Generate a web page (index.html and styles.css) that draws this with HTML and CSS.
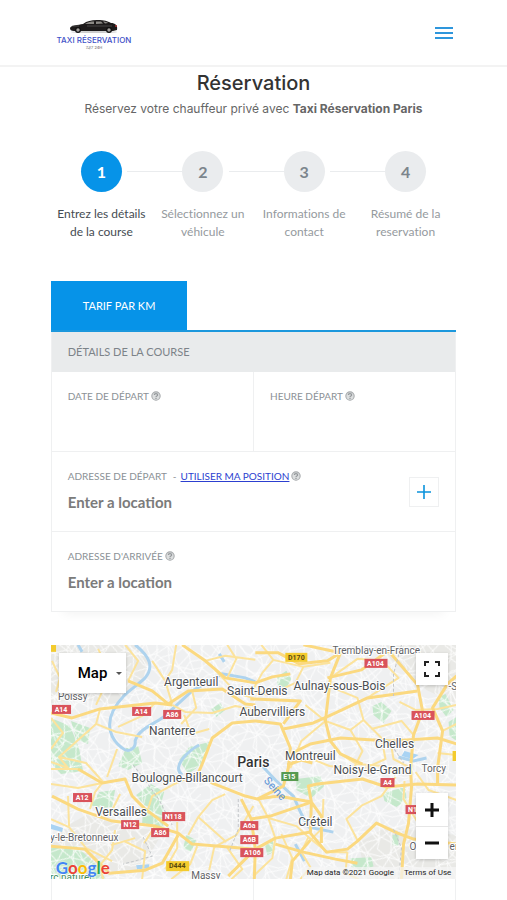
FILE: index.html
```html
<!DOCTYPE html>
<html lang="fr">

<head>
  <meta charset="utf-8" />
  <meta name="viewport" content="width=device-width, initial-scale=1" />
  <title>Taxi Réservation Paris</title>
  <link rel="stylesheet" href="styles.css">
</head>

<body>
  <svg class="defs" width="0" height="0" aria-hidden="true">
    <symbol id="help" viewBox="0 0 12 12">
      <circle cx="6" cy="6" r="5" fill="#dcdedf" stroke="#a8abad" stroke-width="1.3" />
      <path d="M4 4.8C4 2.6 8 2.6 8 4.8C8 6 6 6 6 7.2M6 8.2V9.6" fill="none" stroke="#94989b" stroke-width="1.5" />
    </symbol>
  </svg>

  <header class="header">
    <a href="#" class="logo" aria-label="Taxi Réservation">
      <svg width="76" height="32" viewBox="0 0 76 32">
        <ellipse cx="38" cy="15" rx="23" ry="1" fill="#ccc" />
        <path d="M14 11C15 8 22 8 27 7C31 4 35 3 41 3C49 3 51 4 55 6C59 6 62 8 61 13L57 14H18C15 14 14 13 14 11Z" fill="#1d1b1b" />
        <path d="M29 7C32 5 35 4.500 38 4.500V7ZM40 4.500H45L47 6.500L40 7ZM47 4.500C49 4.500 51 5 52 6L49 6.500Z" fill="#8b8985" />
        <path d="M16 9H23M31 9H56" stroke="#666" stroke-width="0.600" />
        <circle cx="22" cy="13" r="3" fill="#111" />
        <circle cx="22" cy="13" r="1.700" fill="#a5a19e" />
        <circle cx="53" cy="13" r="3" fill="#111" />
        <circle cx="53" cy="13" r="1.700" fill="#a5a19e" />
        <path d="M60 8V10" stroke="#a33" stroke-width="1.500" />
        <text class="logo-name" x="38" y="26" text-anchor="middle">TAXI RÉSERVATION</text>
        <text class="logo-sub" x="38" y="32" text-anchor="middle">7J/7 24H</text>
      </svg>
    </a>
    <button class="menu-btn" type="button" aria-label="Menu">
      <span></span>
      <span></span>
      <span></span>
    </button>
  </header>

  <main class="container">
    <h1>Réservation</h1>
    <p class="intro">Réservez votre chauffeur privé avec <strong>Taxi Réservation Paris</strong></p>

    <ol class="steps">
      <li class="step active"><span class="step-number">1</span><span class="step-label">Entrez les détails de la course</span></li>
      <li class="step"><span class="step-number">2</span><span class="step-label">Sélectionnez un véhicule</span></li>
      <li class="step"><span class="step-number">3</span><span class="step-label">Informations de contact</span></li>
      <li class="step"><span class="step-number">4</span><span class="step-label">Résumé de la reservation</span></li>
    </ol>

    <div class="tabs">
      <a href="#booking" class="tab">TARIF PAR KM</a>
    </div>

    <form id="booking" class="booking">
      <h2>DÉTAILS DE LA COURSE</h2>
      <div class="row">
        <div class="field">
          <div class="caption"><label for="date">DATE DE DÉPART</label><svg class="help"><use href="#help" /></svg></div>
          <input id="date" type="text">
        </div>
        <div class="field">
          <div class="caption"><label for="time">HEURE DÉPART</label><svg class="help"><use href="#help" /></svg></div>
          <input id="time" type="text">
        </div>
      </div>
      <div class="row">
        <div class="field">
          <div class="caption"><label for="from">ADRESSE DE DÉPART</label><span class="dash">-</span><a href="#from">UTILISER MA POSITION</a><svg class="help"><use href="#help" /></svg></div>
          <input id="from" type="text" placeholder="Enter a location">
        </div>
        <button class="add-btn" type="button" aria-label="Ajouter une adresse">
          <svg width="14" height="14" viewBox="0 0 14 14"><path d="M7 0V14M0 7H14" stroke="#0b93dc" stroke-width="1.600" /></svg>
        </button>
      </div>
      <div class="row">
        <div class="field">
          <div class="caption"><label for="to">ADRESSE D'ARRIVÉE</label><svg class="help"><use href="#help" /></svg></div>
          <input id="to" type="text" placeholder="Enter a location">
        </div>
      </div>
    </form>

    <section class="map">
      <svg class="map-canvas" viewBox="0 0 405 234" preserveAspectRatio="xMidYMid slice">
        <defs>
          <pattern id="streets" width="47" height="41" patternUnits="userSpaceOnUse" patternTransform="rotate(17)">
            <path d="M0 6L14 9L31 3L47 6M0 24L9 19L25 25L47 24M4 41L10 20L7 9L4 0M22 41L25 25L18 8L22 0M39 41L34 24L41 10L39 0M9 19L18 8L34 24L47 33M0 33L12 35L25 25M31 3L41 10M12 35L22 41" />
          </pattern>
          <pattern id="lanes" width="31" height="37" patternUnits="userSpaceOnUse" patternTransform="rotate(-28)">
            <path d="M0 9L11 12L22 6L31 9M0 26L13 29L31 26M6 37L13 29L11 12L6 0M24 37L20 20L22 6L24 0M11 12L20 20L31 17" />
          </pattern>
        </defs>

        <rect width="405" height="234" fill="#eff0f1" />

        <!-- countryside -->
        <g fill="#e9e9e6">
          <path d="M0 0H85L98 15L92 34L66 60L30 54L0 58Z" />
          <path d="M330 0H405V60L375 45L340 15Z" />
          <path d="M0 190L35 170L75 182L112 186L90 225L0 234Z" />
          <path d="M307 198L335 182L405 190V234H315Z" />
        </g>

        <!-- woods and parks -->
        <g fill="#c5e8cb">
          <path d="M0 73L19 81L28 103L32 126L10 129L0 118Z" />
          <path d="M20 76L39 83L37 99L25 94Z" />
          <path d="M67 121L75 103L87 101L91 118L77 125Z" />
          <path d="M128 115L138 102L158 97L151 119L137 129Z" />
          <path d="M226 32L235 26L240 34L235 43L226 40Z" />
          <path d="M85 150L100 139L113 147L108 166L93 160Z" />
          <path d="M92 164L112 160L112 185L91 178Z" />
          <path d="M0 203L25 201L42 216L55 234H0Z" />
          <path d="M39 160L48 147L64 145L61 162L49 163Z" />
          <path d="M245 134L269 131L273 141L260 153L245 145Z" />
          <path d="M331 148L354 142L355 155L345 162L333 156Z" />
          <path d="M321 61L330 57L340 66L332 78L322 70Z" />
          <path d="M387 52L394 49L402 65L395 72L388 63Z" />
          <path d="M397 77L405 72V96L398 91Z" />
          <path d="M299 213L320 212L322 221L311 226L300 222Z" />
          <path d="M214 201L221 195L224 206L216 210Z" />
          <path d="M341 190L347 189V201L341 200Z" />
          <path d="M160 64L169 58L174 65L165 72Z" />
          <path d="M135 190L145 195L140 207L132 203Z" />
        </g>
        <rect width="405" height="234" fill="url(#streets)" class="streets" />
        <rect width="405" height="234" fill="url(#lanes)" class="streets" />

        <!-- rivers -->
        <g class="river">
          <path d="M84 0C99 12 103 22 94 33C84 43 71 48 62 66C55 80 59 94 71 103C78 109 85 103 84 96C88 82 108 78 117 68L141 46L171 29L194 33L204 37" />
          <path d="M131 130C119 121 140 104 148 100M210 120L224 135L242 151L250 169L257 182M257 182L282 187M244 199L253 216M27 0L31 7" />
          <path d="M347 112L362 116L375 113M168 9L173 17" />
        </g>
        <path d="M0 179L12 183L11 187L0 184ZM85 220L98 219V223L86 224ZM353 106L367 110L361 114L350 111Z" fill="#a9d3f3" />

        <!-- secondary roads -->
        <g class="road thin">
          <path d="M1 16L9 33L5 47M47 4L52 14M45 60L51 47M101 16L114 36L121 59M125 0L121 25L114 36M77 36L87 16L74 0" />
          <path d="M49 64L45 79L8 112L17 123L0 117M45 79L65 87L91 92M0 73L12 88L0 104M8 112L35 118L52 137M66 104L56 132M104 58L91 71L67 82" />
          <path d="M121 60L134 67L161 68L184 61L205 65M133 70L140 89L158 84M141 46L145 63L130 79M154 16L174 11L204 15M164 25L185 48L204 54M176 0L185 14L176 33" />
          <path d="M210 0L222 15L252 22L279 18M222 15L211 28L200 48M252 22L244 38L218 50L202 47M279 33L306 14L331 16M331 16L347 33L316 53" />
          <path d="M254 60L274 76L299 85L312 75L306 53L279 42M312 75L330 93L334 114L314 123M299 85L311 106L303 122M274 76L250 96L239 123M339 96L342 114L359 123" />
          <path d="M348 57L364 65L386 64L405 60M362 90L350 76L320 84M391 86L405 79M386 108L405 110M289 109L305 119L332 121L344 130M258 113L278 121L302 124" />
          <path d="M0 139L27 143L51 138M0 124L27 124M39 164L44 147L51 138M64 185L61 205L49 220L52 234M73 196L94 206L91 234M104 181L93 198" />
          <path d="M147 128L121 140L101 151L97 164M126 177L126 203L114 224M137 190L147 172L161 155L174 149M147 172L175 197M158 225L163 202L185 190L202 161" />
          <path d="M207 154L217 173L224 193L221 213L202 231M217 173L245 181L257 192L276 207L296 207M230 189L241 213L235 234M257 192L250 207L259 222L249 234" />
          <path d="M272 154L271 183L259 195M296 207L294 228L307 234M307 197L295 174L311 160L330 151L344 132M353 136L352 154L369 182M364 127L377 145L405 155" />
          <path d="M0 174L18 182L35 203L61 216M17 151L18 181M60 200L84 193M69 149L59 169M146 201L139 219L120 234M175 201L191 224L180 234" />
        </g>

        <!-- motorways -->
        <g class="road">
          <path d="M0 68L21 73L49 64L104 58L121 60M77 36L101 46L117 59L137 46L171 44L194 59L204 60M131 0L154 16L174 33L204 38L221 32L239 29" />
          <path d="M204 76L181 78L161 93L151 119L147 128L161 138L194 151L206 154L232 141L237 123L239 103L229 79Z" />
          <path d="M252 0L289 8L276 16L248 19L227 8L204 8M289 8L279 33L274 76L279 96L289 109L311 119" />
          <path d="M199 54L249 56L232 79M232 84L262 78L282 69L316 53L366 46M239 109L259 99L289 93L339 96L386 93L405 99" />
          <path d="M276 33L310 25L337 6L366 40L371 66L362 90L359 123L360 142L357 178L352 199L350 234M405 31L396 39L381 63L391 86L386 123L386 141" />
          <path d="M1 151L27 164L61 176L104 181L127 188L141 199L204 204L224 193L259 187M27 124L51 138L74 134L81 151L94 164L117 181" />
          <path d="M0 201L34 204L58 228L94 225L111 218L127 190M190 154L200 174L204 204L203 234M177 231L202 206" />
          <path d="M206 154L227 151L260 157L257 141L266 139L311 134L335 142L366 139L405 140M260 157L259 188L275 207L296 204L306 196L325 178L346 188L362 194L405 199M260 157L270 171L270 198" />
          <path d="M199 174L219 171L260 157M224 199L252 207L284 214L306 218M236 120L250 115L261 118M259 195L241 216L239 234" />
        </g>

        <g class="border">
          <path d="M82 120L94 135L108 155L121 180M187 154L187 184L178 207M92 192L101 211L72 219M350 0L342 29L342 51M342 184L350 203L347 234M340 100L352 118" />
        </g>

        <!-- place names -->
        <g class="place" text-anchor="middle">
          <text x="140" y="41">Argenteuil</text>
          <text x="206" y="50">Saint-Denis</text>
          <text x="288" y="45">Aulnay-sous-Bois</text>
          <text x="221" y="71">Aubervilliers</text>
          <text x="121" y="90">Nanterre</text>
          <text x="343" y="103">Chelles</text>
          <text x="259" y="115">Montreuil</text>
          <text x="321" y="129">Noisy-le-Grand</text>
          <text x="136" y="137">Boulogne-Billancourt</text>
          <text x="70" y="171">Versailles</text>
          <text x="264" y="181">Créteil</text>
          <text x="202" y="122" class="city">Paris</text>
        </g>
        <g class="place small">
          <text x="281" y="9">Tremblay-en-France</text>
          <text x="7" y="55">Poissy</text>
          <text x="370" y="127">Torcy</text>
          <text x="-1" y="196">y-le-Bretonneux</text>
          <text x="140" y="234">Massy</text>
          <text x="358" y="205">O</text>
          <text x="398" y="205">er</text>
          <text x="397" y="45">-S</text>
          <text x="-1" y="236" class="park">rc naturel</text>
        </g>
        <text class="water" transform="translate(212 136) rotate(48)">Seine</text>

        <!-- road shields -->
        <g class="shields" text-anchor="middle">
          <rect x="1" y="60" width="19" height="9" /><text x="10" y="67">A14</text>
          <rect x="81" y="62" width="19" height="9" /><text x="90" y="69">A14</text>
          <rect x="112" y="65" width="18" height="9" /><text x="121" y="72">A86</text>
          <rect x="313" y="14" width="23" height="9" /><text x="324" y="21">A104</text>
          <rect x="360" y="66" width="23" height="9" /><text x="371" y="73">A104</text>
          <rect x="22" y="148" width="19" height="9" /><text x="31" y="155">A12</text>
          <rect x="111" y="167" width="23" height="9" /><text x="122" y="174">N118</text>
          <rect x="70" y="175" width="18" height="9" /><text x="79" y="182">N12</text>
          <rect x="100" y="183" width="18" height="9" /><text x="109" y="190">A86</text>
          <rect x="189" y="176" width="18" height="9" /><text x="198" y="183">A6a</text>
          <rect x="189" y="190" width="18" height="9" /><text x="198" y="197">A6B</text>
          <rect x="189" y="203" width="23" height="9" /><text x="201" y="210">A106</text>
          <rect x="329" y="133" width="14" height="9" /><text x="336" y="140">A4</text>
          <rect x="354" y="160" width="18" height="9" /><text x="361" y="167">N1</text>
          <rect x="230" y="127" width="17" height="9" class="green" /><text x="238" y="134">E15</text>
          <rect x="234" y="8" width="22" height="9" class="yellow" /><text x="245" y="15" class="dark">D170</text>
          <rect x="115" y="216" width="23" height="10" class="yellow" /><text x="126" y="223" class="dark">D444</text>
          <rect x="401" y="106" width="8" height="10" class="yellow" />
          <rect x="-3" y="0" width="8" height="7" class="yellow" />
        </g>
      </svg>

      <button class="map-btn map-type" type="button">Map<span class="caret"></span></button>
      <button class="map-btn fullscreen" type="button" aria-label="Plein écran">
        <svg width="16" height="16" viewBox="0 0 16 16"><path d="M1 5V1H5M11 1H15V5M15 11V15H11M5 15H1V11" fill="none" stroke="#222" stroke-width="2" /></svg>
      </button>
      <div class="zoom">
        <button type="button" aria-label="Zoom avant"><svg width="16" height="16" viewBox="0 0 16 16"><path d="M8 1V15M1 8H15" stroke="#111" stroke-width="3" /></svg></button>
        <button type="button" aria-label="Zoom arrière"><svg width="16" height="16" viewBox="0 0 16 16"><path d="M1 8H15" stroke="#111" stroke-width="3" /></svg></button>
      </div>
      <a href="#" class="google"><span class="b">G</span><span class="r">o</span><span class="y">o</span><span class="b">g</span><span class="g">l</span><span class="r">e</span></a>
      <div class="credits"><span>Map data ©2021 Google</span><a href="#">Terms of Use</a></div>
    </section>

    <div class="summary">
      <div></div>
      <div></div>
    </div>
  </main>
</body>

</html>
```
FILE: styles.css
```css
* {
  box-sizing: border-box;
}

body {
  margin: 0;
  background: #fff;
  color: #666;
  font-family: Lato, "Liberation Sans", sans-serif;
  font-variant-ligatures: none;
}

button {
  padding: 0;
  border: 0;
  background: #fff;
  cursor: pointer;
}

.defs {
  position: absolute;
}

.header {
  display: flex;
  align-items: center;
  justify-content: space-between;
  height: 67px;
  padding: 0 54px 0 56px;
  border-bottom: 2px solid #f3f3f3;
}

.logo svg {
  display: block;
  overflow: visible;
}

.logo-name {
  fill: #3f51c8;
  font: 500 8px Inter, sans-serif;
}

.logo-sub {
  fill: #555;
  font: 4px Inter, sans-serif;
}

.menu-btn {
  display: grid;
  gap: 3px;
  width: 18px;
}

.menu-btn span {
  height: 2px;
  background: #2e96dc;
}

.container {
  width: 80%;
  margin: 0 auto;
}

h1 {
  margin: 3px 0 0;
  color: #333;
  font: 500 20px/26px Inter, sans-serif;
  text-align: center;
}

.intro {
  margin: 4px -20px 0;
  font: 12px/18px Inter, sans-serif;
  text-align: center;
}

.steps {
  display: grid;
  grid-template-columns: repeat(4, 1fr);
  margin: 33px 0 0;
  padding: 0;
  list-style: none;
}

.step {
  position: relative;
  color: #959a9e;
  font-size: 12px;
  line-height: 18px;
  text-align: center;
}

.step + .step::before {
  content: "";
  position: absolute;
  top: 20px;
  right: calc(50% + 20px);
  left: calc(-50% + 26px);
  height: 1px;
  background: #eaecee;
}

.step-number {
  display: block;
  width: 41px;
  margin: 0 auto 13px;
  border-radius: 50%;
  background: #eaecee;
  color: #7c858c;
  font-size: 16px;
  font-weight: 700;
  line-height: 41px;
}

.step-label {
  display: block;
}

.step.active {
  color: #454c52;
}

.active .step-number {
  background: #0693e8;
  color: #fff;
}

.tabs {
  display: flex;
  margin-top: 40px;
  border-bottom: 2px solid #1c98dd;
}

.tab {
  padding: 0 32px;
  background: #0693e8;
  color: #fff;
  font-size: 11px;
  line-height: 49px;
  text-decoration: none;
}

.booking {
  border: 1px solid #eff0f1;
  border-top: 0;
  box-shadow: 0 14px 10px -12px rgba(0, 0, 0, 0.05);
}

h2 {
  margin: 0;
  padding: 0 16px;
  background: #e9ebec;
  color: #7c8389;
  font-size: 11px;
  font-weight: 400;
  line-height: 40px;
}

.row {
  display: flex;
  align-items: center;
}

.row + .row {
  border-top: 1px solid #eff0f1;
}

.field {
  flex: 1;
  min-width: 0;
  padding: 16px 16px 17px;
}

.field + .field {
  border-left: 1px solid #eff0f1;
}

.caption {
  display: flex;
  align-items: center;
  height: 16px;
  color: #8b9196;
  font-size: 10px;
  white-space: nowrap;
}

.caption a {
  color: #2c3fd0;
}

.dash {
  margin: 0 4px 0 6px;
}

.help {
  width: 10px;
  height: 10px;
  margin-left: 2px;
}

.field input {
  display: block;
  width: 100%;
  height: 24px;
  margin-top: 6px;
  padding: 0;
  border: 0;
  outline: 0;
  background: none;
  color: #777;
  font: 700 15px/24px Lato, sans-serif;
}

.field input::placeholder {
  color: #7b7b7b;
  opacity: 1;
}

.add-btn {
  display: grid;
  place-items: center;
  width: 30px;
  height: 30px;
  margin-right: 16px;
  border: 1px solid #eff0f1;
}

.map {
  position: relative;
  height: 234px;
  margin-top: 33px;
  overflow: hidden;
  font-family: Roboto, sans-serif;
}

.map-canvas {
  display: block;
  width: 100%;
  height: 100%;
}

pattern path {
  fill: none;
  stroke: #fff;
  stroke-width: 1;
}

.streets {
  opacity: 0.8;
}

.river {
  fill: none;
  stroke: #aed3ee;
  stroke-width: 3;
}

.road {
  fill: none;
  stroke: #fbd980;
  stroke-width: 3;
  stroke-linejoin: round;
}

.road.thin {
  stroke: #fce39c;
  stroke-width: 2;
}

.border {
  fill: none;
  stroke: #c4c7ca;
  stroke-width: 1;
  stroke-dasharray: 3 2;
}

.place {
  fill: #4b4e52;
  stroke: #fff;
  stroke-width: 2;
  paint-order: stroke;
  font-size: 12px;
}

.place.small {
  fill: #5f6266;
  font-size: 10px;
}

.place .city {
  fill: #333;
  font-size: 14px;
  font-weight: 500;
}

.place .park {
  fill: #3f8a5b;
}

.water {
  fill: #5a93d6;
  font-size: 11px;
}

.shields {
  fill: #d9535b;
  font-size: 7px;
  font-weight: 700;
}

.shields text {
  fill: #fff;
}

.shields .green {
  fill: #579a4f;
}

.shields .yellow {
  fill: #f3cb2e;
}

.shields .dark {
  fill: #5a4a10;
}

.map-btn {
  position: absolute;
  top: 8px;
  box-shadow: 0 1px 3px rgba(0, 0, 0, 0.2);
}

.map-type {
  left: 8px;
  display: flex;
  align-items: center;
  justify-content: space-between;
  width: 67px;
  height: 40px;
  padding: 0 4px 0 19px;
  color: #000;
  font: 500 15px Roboto, sans-serif;
}

.caret {
  border: 3px solid transparent;
  border-top-color: #555;
  border-bottom: 0;
}

.fullscreen {
  right: 8px;
  display: grid;
  place-items: center;
  width: 32px;
  height: 32px;
}

.zoom {
  position: absolute;
  right: 8px;
  bottom: 20px;
  width: 32px;
  background: #fff;
  box-shadow: 0 1px 3px rgba(0, 0, 0, 0.2);
}

.zoom button {
  display: grid;
  place-items: center;
  width: 100%;
  height: 33px;
}

.zoom button + button {
  border-top: 1px solid #e6e6e6;
}

.google {
  position: absolute;
  bottom: 1px;
  left: 5px;
  font: 700 17px/20px Lato, sans-serif;
  text-decoration: none;
  text-shadow: 0 0 2px #fff;
}

.google .b {
  color: #4285f4;
}

.google .r {
  color: #ea4335;
}

.google .y {
  color: #fbbc05;
}

.google .g {
  color: #34a853;
}

.credits {
  position: absolute;
  right: 0;
  bottom: 0;
  display: flex;
  gap: 10px;
  padding: 0 5px;
  background: rgba(245, 245, 245, 0.7);
  color: #222;
  font-size: 8px;
  line-height: 12px;
}

.credits a {
  color: #222;
  text-decoration: none;
}

.summary {
  display: grid;
  grid-template-columns: 1fr 1fr;
  border-right: 1px solid #eff0f1;
}

.summary div {
  padding: 11px;
  border-left: 1px solid #eff0f1;
}
```
